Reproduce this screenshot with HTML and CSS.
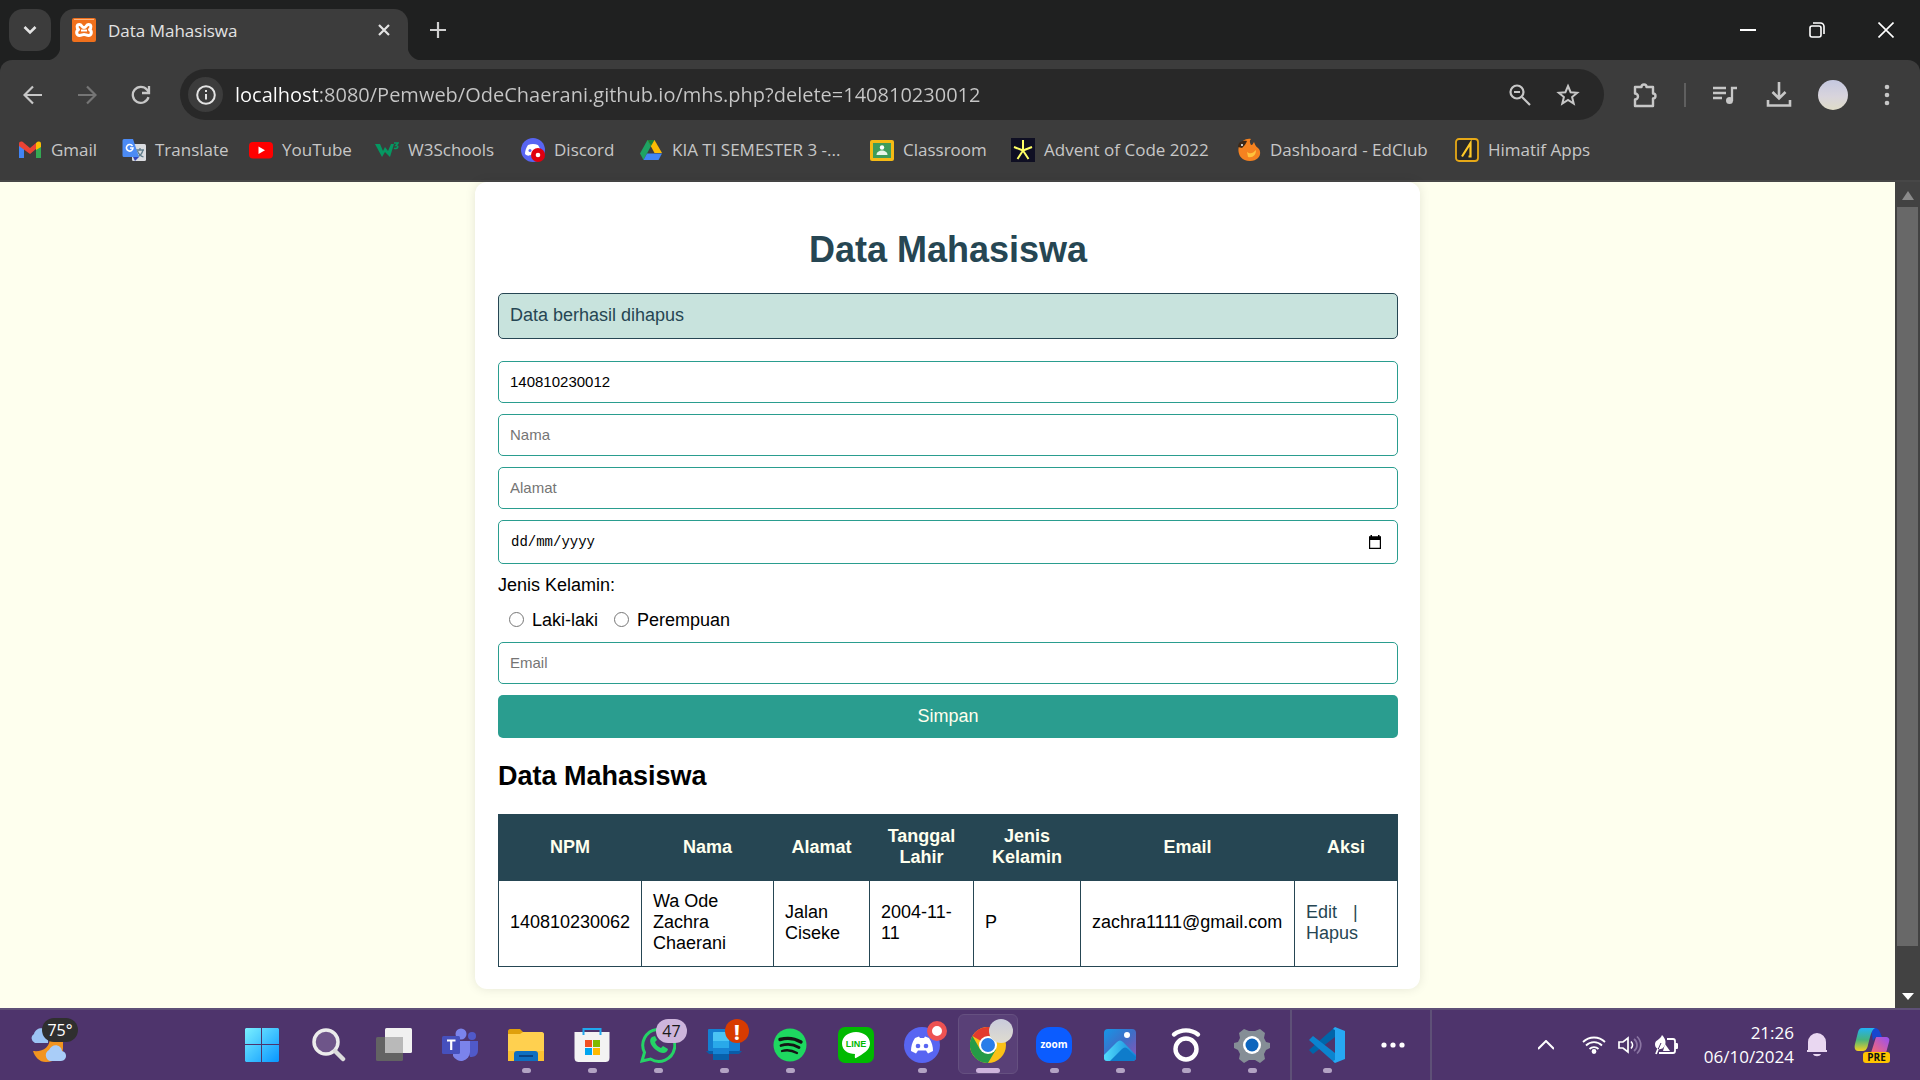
FILE: index.html
```html
<!DOCTYPE html>
<html lang="id">
<head>
<meta charset="utf-8">
<meta name="viewport" content="width=device-width, initial-scale=1">
<title>Data Mahasiswa</title>
<link rel="stylesheet" href="styles.css">
</head>
<body>
<header class="browser">
  <div class="tabstrip">
    <button class="tab-search" type="button" aria-label="Search tabs"><svg width="16" height="16" viewBox="0 0 16 16" fill="none" stroke="#e3e3e3" stroke-width="2.6"><path d="M2.5 5 8 10.500 13.500 5"/></svg></button>
    <div class="tab">
      <svg width="24" height="24" viewBox="0 0 24 24"><rect width="24" height="24" rx="2" fill="#f0701c"/><path d="M2 1.500h20" stroke="#ffb27a" stroke-width="1"/><path d="M7.500 6.500c-3 0-3 3.500-1 5-3 2-2 6 1 6 2 0 3-1 4.500-1s2.500 1 4.500 1c3 0 4-4 1-6 2-1.500 2-5-1-5-2.500 0-2 3-4.500 3s-2-3-4.500-3z" fill="none" stroke="#fff" stroke-width="3" stroke-linejoin="round"/><path d="M9 12.500h6" stroke="#fff" stroke-width="2"/></svg>
      <span class="tab-title">Data Mahasiswa</span>
      <button class="tab-close" type="button" aria-label="Close tab"><svg width="14" height="14" viewBox="0 0 14 14" stroke="#e3e3e3" stroke-width="2.200"><path d="M2 2l10 10M12 2 2 12"/></svg></button>
    </div>
    <button class="new-tab" type="button" aria-label="New tab"><svg width="16" height="16" viewBox="0 0 16 16" stroke="#d0d0d0" stroke-width="2.200"><path d="M8 0v16M0 8h16"/></svg></button>
    <div class="window-controls">
      <button type="button" aria-label="Minimize"><svg width="16" height="16" viewBox="0 0 16 16" stroke="#fff" stroke-width="2"><path d="M0 8h16"/></svg></button>
      <button type="button" aria-label="Restore"><svg width="16" height="16" viewBox="0 0 16 16" fill="none" stroke="#fff" stroke-width="1.600"><rect x="1" y="4" width="11" height="11" rx="2"/><path d="M4 1h7.500a3.500 3.500 0 0 1 3.500 3.500V12"/></svg></button>
      <button type="button" aria-label="Close"><svg width="16" height="16" viewBox="0 0 16 16" stroke="#fff" stroke-width="1.600"><path d="M.5.5l15 15M15.500.5l-15 15"/></svg></button>
    </div>
  </div>
  <div class="toolbar">
    <button class="nav" type="button" aria-label="Back"><svg width="20" height="20" viewBox="0 0 20 20" fill="none" stroke="#c7c7c7" stroke-width="2.200"><path d="M19 10H2M10 1.500 1.500 10 10 18.500"/></svg></button>
    <button class="nav" type="button" aria-label="Forward"><svg width="20" height="20" viewBox="0 0 20 20" fill="none" stroke="#757575" stroke-width="2.200"><path d="M1 10h17M10 1.500 18.500 10 10 18.500"/></svg></button>
    <button class="nav" type="button" aria-label="Reload"><svg width="20" height="20" viewBox="0 0 20 20" fill="none" stroke="#c7c7c7" stroke-width="2.300"><path d="M17.500 12.200A8 8 0 1 1 16 4.800l1.800 2M18 1v7h-7"/></svg></button>
    <div class="omnibox">
      <button class="site-info" type="button" aria-label="Site information"><svg width="20" height="20" viewBox="0 0 20 20" fill="none" stroke="#e3e3e3" stroke-width="2"><circle cx="10" cy="10" r="8.800"/><path d="M10 9v5.500M10 5v2"/></svg></button>
      <input class="url" type="text" aria-label="Address" value="localhost:8080/Pemweb/OdeChaerani.github.io/mhs.php?delete=140810230012">
      <button class="in-omni" type="button" aria-label="Zoom"><svg width="22" height="22" viewBox="0 0 22 22" fill="none" stroke="#c7c7c7" stroke-width="2.200"><circle cx="8" cy="8" r="6.500"/><path d="M13 13l8 8M5 8h6"/></svg></button>
      <button class="in-omni" type="button" aria-label="Bookmark"><svg width="24" height="24" viewBox="0 0 24 24" fill="none" stroke="#c7c7c7" stroke-width="2"><path d="M12 3l2.600 6.200 6.600.5-5.100 4.300 1.600 6.500L12 17l-5.700 3.500 1.600-6.500-5.100-4.300 6.600-.5z"/></svg></button>
    </div>
    <div class="tools">
      <button type="button" aria-label="Extensions"><svg width="26" height="26" viewBox="0 0 26 26" fill="none" stroke="#c7c7c7" stroke-width="2.400" stroke-linejoin="round"><path d="M3 5h6.500a2 2 0 0 1 5 0H21v6.500a2 2 0 0 1 0 5V24H3v-6.500a3 3 0 0 0 0-6z"/></svg></button>
      <span class="divider"></span>
      <button type="button" aria-label="Media"><svg width="24" height="20" viewBox="0 0 24 20" fill="none" stroke="#c7c7c7" stroke-width="2.300"><path d="M0 3h13M0 8h13M0 13h9M19 16V3h5"/><circle cx="16.500" cy="15.500" r="3.500" fill="#c7c7c7" stroke="none"/></svg></button>
      <button type="button" aria-label="Downloads"><svg width="26" height="26" viewBox="0 0 26 26" fill="none" stroke="#c7c7c7" stroke-width="2.600"><path d="M13 0v16M6.500 10l6.500 6.500 6.500-6.500M2 18v5.500h22V18"/></svg></button>
      <button type="button" aria-label="Profile"><span class="avatar"></span></button>
      <button type="button" aria-label="Menu"><svg width="6" height="22" viewBox="0 0 6 22" fill="#c7c7c7"><circle cx="3" cy="3" r="2.300"/><circle cx="3" cy="11" r="2.300"/><circle cx="3" cy="19" r="2.300"/></svg></button>
    </div>
  </div>
  <nav class="bookmarks">
    <a href="#"><svg width="24" height="24" viewBox="0 0 24 24"><path d="M1 6v14h5V10z" fill="#4285f4"/><path d="M18 10v10h5V6z" fill="#34a853"/><path d="M1 6c0-3 3-3 5-1l6 5 6-5v6l-6 5-11-8z" fill="#ea4335"/><path d="M18 5c2-2 5-2 5 1v3l-5 3z" fill="#fbbc04"/></svg>Gmail</a>
    <a href="#"><svg width="24" height="24" viewBox="0 0 24 24"><rect x="10" y="6" width="14" height="17" rx="1.500" fill="#dadce0"/><path d="M14 12h8M18 10v2M21 12c-1 4-3 6-6 7M15.500 13c1 3 3 5 6 6" stroke="#607d8b" stroke-width="1.300" fill="none"/><path d="M2 1h9l6 18H2a1.500 1.500 0 0 1-1.500-1.500v-15A1.500 1.500 0 0 1 2 1z" fill="#4c8bf5"/><path d="M11 19h6l-4 4z" fill="#3344b8"/><path d="M10.500 8A3.300 3.300 0 1 0 11 10H8" fill="none" stroke="#fff" stroke-width="1.600"/></svg>Translate</a>
    <a href="#"><svg width="24" height="24" viewBox="0 0 24 24"><rect y="4" width="24" height="16.500" rx="4" fill="#f00"/><path d="M9.500 8.500v7.500l6.500-3.700z" fill="#fff"/></svg>YouTube</a>
    <a href="#"><svg width="24" height="24" viewBox="0 0 24 24"><path d="M0 6h5l3 7 2-4 3 4 3-7h3l-4 13-5-5-3 5z" fill="#059862"/><path d="M19 5h4l-2 2.500c3 0 2 4-2 2.700" fill="none" stroke="#059862" stroke-width="1.600"/></svg>W3Schools</a>
    <a href="#"><svg width="24" height="24" viewBox="0 0 24 24"><circle cx="12" cy="12" r="12" fill="#5865f2"/><path d="M7 7c3-1.500 7-1.500 10 0 2 3 3 6 3 9-2 2-3 2-4 1-2 .7-5 .7-7 0-1 1-3 1-5-1 0-3 1-6 3-9z" fill="#fff"/><circle cx="9" cy="12.500" r="1.500" fill="#5865f2"/><circle cx="17" cy="17" r="7" fill="#e00010"/><circle cx="17" cy="17" r="2.300" fill="#fff"/></svg>Discord</a>
    <a href="#"><svg width="24" height="24" viewBox="0 0 24 24"><path d="M8.500 2h7l7.500 13h-7.500z" fill="#fbbc04"/><path d="M8.500 2 12 8 4.500 22 1 15.500z" fill="#1ea362"/><path d="M8.500 2h7L12 8z" fill="#188038"/><path d="M8 15.500h15L19.500 22h-15z" fill="#4285f4"/></svg>KIA TI SEMESTER 3 -...</a>
    <a href="#"><svg width="24" height="24" viewBox="0 0 24 24"><rect y="2" width="24" height="21" rx="2" fill="#f5ba15"/><rect x="3" y="5" width="18" height="15" fill="#3f9c5a"/><circle cx="12" cy="9.500" r="2.200" fill="#fff"/><path d="M6.500 17c0-6 11-6 11 0z" fill="#e8f5e9"/></svg>Classroom</a>
    <a href="#"><svg width="24" height="24" viewBox="0 0 24 24"><rect width="24" height="24" fill="#0f0f23"/><path d="M12 2v11M3 9l9 3.500M21 9l-9 3.500M6.500 21 12 12.500l5.500 8.500" stroke="#ffff66" stroke-width="2" fill="none"/></svg>Advent of Code 2022</a>
    <a href="#"><svg width="24" height="24" viewBox="0 0 24 24"><path d="M2 8C4 3 9 0 14 1c-2 2-1 4 0 6 2 0 2-2 3-3 1 2 1 4 4 6 4 3 3 13-8 13C3 23 0 15 2 8z" fill="#f58220"/><path d="M10 14c4 3 7 0 9-2 0 5-3 8-8 7z" fill="#ffc23c"/><path d="M1 9c0-4 3-7 9-6-1 3-3 5-5 7z" fill="#3b2818"/><circle cx="5" cy="7" r="1" fill="#fff"/></svg>Dashboard - EdClub</a>
    <a href="#"><svg width="24" height="24" viewBox="0 0 24 24"><rect x="1" y="1" width="22" height="22" rx="3" fill="#282828" stroke="#e6a817" stroke-width="1.800"/><path d="M7 18.500 15.500 5v13.500h-2" fill="none" stroke="#ffc928" stroke-width="2.200"/></svg>Himatif Apps</a>
  </nav>
</header>

<div class="viewport">
  <main class="page">
    <div class="container">
      <h1>Data Mahasiswa</h1>
      <div class="message" role="status">Data berhasil dihapus</div>
      <form class="form">
        <input class="field" type="text" aria-label="NPM" value="140810230012">
        <input class="field" type="text" aria-label="Nama" placeholder="Nama">
        <input class="field" type="text" aria-label="Alamat" placeholder="Alamat">
        <div class="field date">
          <input type="text" aria-label="Tanggal lahir" placeholder="dd/mm/yyyy">
          <button type="button" aria-label="Pilih tanggal"><svg width="14" height="14" viewBox="0 0 14 14"><path d="M2.500 0h1.500v1.200h6V0h1.500v1.200H13V14H1V1.200h1.500zM2.200 5v7.800h9.600V5z" fill="#000" fill-rule="evenodd"/></svg></button>
        </div>
        <fieldset class="gender">
          <legend>Jenis Kelamin:</legend>
          <div class="options">
            <input type="radio" id="laki" name="jenis_kelamin"><label for="laki">Laki-laki</label>
            <input type="radio" id="perempuan" name="jenis_kelamin"><label for="perempuan">Perempuan</label>
          </div>
        </fieldset>
        <input class="field" type="email" aria-label="Email" placeholder="Email">
        <button class="save" type="button">Simpan</button>
      </form>
      <h2>Data Mahasiswa</h2>
      <table>
        <colgroup><col class="npm"><col class="nama"><col class="alamat"><col class="lahir"><col class="kelamin"><col class="email"><col class="aksi"></colgroup>
        <thead>
          <tr><th>NPM</th><th>Nama</th><th>Alamat</th><th>Tanggal Lahir</th><th>Jenis Kelamin</th><th>Email</th><th>Aksi</th></tr>
        </thead>
        <tbody>
          <tr><td>140810230062</td><td>Wa Ode Zachra Chaerani</td><td>Jalan Ciseke</td><td>2004-11-11</td><td>P</td><td>zachra1111@gmail.com</td><td><a class="edit" href="#">Edit</a> <span class="bar">|</span> <a href="#">Hapus</a></td></tr>
        </tbody>
      </table>
    </div>
  </main>
  <div class="scrollbar">
    <svg width="12" height="9" viewBox="0 0 12 9"><path d="M0 9 6 0l6 9z" fill="#8a8a8a"/></svg>
    <span class="thumb"></span>
    <svg width="12" height="7" viewBox="0 0 12 7"><path d="M0 0h12L6 7z" fill="#fff"/></svg>
  </div>
</div>

<footer class="taskbar">
  <button class="weather" type="button" aria-label="Weather">
    <svg width="37" height="38" viewBox="0 0 37 38"><path d="M3 25c10 1 17-3 17-14l13-2v13c0 9-8 14-17 14C9 36 5 31 3 25z" fill="#f2941f"/><path d="M5 17a5 5 0 0 1-1-9c2-7 12-8 14 0v9z" fill="#9cc4f5"/><path d="M20 35a6 6 0 0 1-1-11c3-7 12-6 13 1 6 1 5 10-1 10z" fill="#a9cdf8"/></svg>
    <span class="temp">75°</span>
  </button>
  <div class="apps">
    <button type="button" aria-label="Start"><svg width="36" height="36" viewBox="0 0 36 36"><defs><linearGradient id="win" x1="0" y1="0" x2="1" y2="1"><stop stop-color="#7af0ff"/><stop offset="1" stop-color="#0896ff"/></linearGradient></defs><path d="M2 1h15v16H1V2zM18 1h16l1 1v15H18zM1 18h16v17H2l-1-1zM18 18h17v16l-1 1H18z" fill="url(#win)"/></svg></button>
    <button type="button" aria-label="Search"><svg width="36" height="36" viewBox="0 0 36 36"><circle cx="16" cy="15" r="12" fill="#6e5589" stroke="#ececec" stroke-width="3.500"/><path d="M25 24l8 8" stroke="#dcdcdc" stroke-width="4.500" stroke-linecap="round"/></svg></button>
    <button type="button" aria-label="Task view"><svg width="36" height="36" viewBox="0 0 36 36"><rect x="0" y="10" width="27" height="24" rx="1.500" fill="#636363"/><rect x="9" y="1" width="27" height="25" rx="1.500" fill="#f1f1f1"/><path d="M9 10h18v16H10l-1-1z" fill="#b9b9b9"/></svg></button>
    <button type="button" aria-label="Teams"><svg width="36" height="36" viewBox="0 0 36 36"><circle cx="30" cy="9" r="4" fill="#5059c9"/><path d="M25 14h11v9c0 8-8 7-8 7z" fill="#5059c9"/><circle cx="19" cy="7" r="5.500" fill="#7b83eb"/><path d="M11 14h17v11a9 9 0 0 1-17 4z" fill="#7b83eb"/><rect x="0" y="9" width="18" height="18" rx="1.500" fill="#4650bd"/><path d="M5 13.500h8.500M9.200 13.500V23" stroke="#fff" stroke-width="2.200"/></svg></button>
    <button class="running" type="button" aria-label="File Explorer"><svg width="36" height="36" viewBox="0 0 36 36"><path d="M0 4c0-1 1-2 2-2h10l4 4v8H0z" fill="#dfa00c"/><path d="M0 7h12l3-2h19c1 0 2 1 2 2v27H0z" fill="#ffd04f"/><path d="M0 24h36v10H0z" fill="#fbc132"/><path d="M6 34V27c0-2 1-3 3-3h18c2 0 3 1 3 3v7z" fill="#0f6fc0"/><path d="M11 29h14" stroke="#0a4382" stroke-width="2"/></svg></button>
    <button class="running" type="button" aria-label="Store"><svg width="36" height="36" viewBox="0 0 36 36"><path d="M.5 5h35v26c0 3-2 4-4 4h-27c-2 0-4-1-4-4z" fill="#f3f3f3"/><path d="M9.500 8V2h17v6" fill="none" stroke="#20a8ee" stroke-width="2"/><path d="M11 13h7v7h-7z" fill="#f25022"/><path d="M19 13h7v7h-7z" fill="#7fba00"/><path d="M11 21h7v7h-7z" fill="#00a4ef"/><path d="M19 21h7v7h-7z" fill="#ffb900"/></svg></button>
    <button class="running" type="button" aria-label="WhatsApp"><svg width="36" height="36" viewBox="0 0 36 36"><path d="M2 34l2.500-8.500A16 16 0 1 1 10.500 32z" fill="none" stroke="#25d366" stroke-width="3"/><path d="M12 10c-4 3-1 9 4 13s11 4 12-1l-5-3-2 2c-3-1-5-3-6-6l2-2-2-4z" fill="#25d366"/></svg><span class="badge count">47</span></button>
    <button class="running" type="button" aria-label="Phone Link"><svg width="36" height="36" viewBox="0 0 36 36"><rect x="2" y="2" width="32" height="22" rx="1" fill="#147fd1"/><path d="M0 24h36l-3 3H3z" fill="#0a5ca8"/><rect x="7" y="5" width="16" height="28" rx="1" fill="#4bc5f5"/><path d="M7 14h16v7H7z" fill="#29a9ea"/><path d="M7 21h16v6H7z" fill="#1683d4"/><path d="M7 27h16v6H7z" fill="#0861ab"/></svg><span class="badge alert">!</span></button>
    <button class="running" type="button" aria-label="Spotify"><svg width="36" height="36" viewBox="0 0 36 36" fill="none" stroke="#141414" stroke-linecap="round"><circle cx="18" cy="18" r="16.500" fill="#1ed760" stroke="none"/><path d="M8 12.500c7-2 15-1 21 2.500" stroke-width="3.400"/><path d="M9 18.500c6-2 13-1 18 2" stroke-width="2.800"/><path d="M10 24c5-1.500 10-.8 15 2" stroke-width="2.300"/></svg></button>
    <button type="button" aria-label="LINE"><svg width="36" height="36" viewBox="0 0 36 36"><rect width="36" height="36" rx="7" fill="#00b900"/><path d="M18 5c8 0 14 5 14 11.500C32 23 25 27 18 31c-1 .5-1.500 0-1-4-7 0-13-4-13-10.500S10 5 18 5z" fill="#fff"/><text class="line-word" x="18" y="20" text-anchor="middle">LINE</text></svg></button>
    <button class="running" type="button" aria-label="Discord"><svg width="36" height="36" viewBox="0 0 36 36"><circle cx="18" cy="18" r="18" fill="#5865f2"/><path d="M11 11l4-1.500 1 1.500h4l1-1.500 4 1.500c3 4 4 9 4 13l-5 2.500-2-3h-8l-2 3L7 24c0-4 1-9 4-13z" fill="#fff"/><circle cx="14" cy="19" r="2.300" fill="#5865f2"/><circle cx="22" cy="19" r="2.300" fill="#5865f2"/></svg><span class="badge rec"></span></button>
    <button class="running active" type="button" aria-label="Chrome"><svg width="36" height="36" viewBox="0 0 36 36"><circle cx="18" cy="18" r="18" fill="#fbc116"/><path d="M18 18 2.400 9A18 18 0 0 1 33.600 9H18z" fill="#e33b2e"/><path d="M2.400 9A18 18 0 0 0 18 36l8-13.500L10.200 22.500z" fill="#259b47"/><circle cx="18" cy="18" r="9" fill="#fff"/><circle cx="18" cy="18" r="7" fill="#2a7de9"/></svg><span class="badge face"></span></button>
    <button class="running" type="button" aria-label="Zoom"><svg width="36" height="36" viewBox="0 0 36 36"><rect width="36" height="36" rx="14" fill="#0b5cff"/><text class="zoom-word" x="18" y="21" text-anchor="middle">zoom</text></svg></button>
    <button class="running" type="button" aria-label="Photos"><svg width="36" height="36" viewBox="0 0 36 36"><defs><linearGradient id="ph" x1="0" y1="0" x2="1" y2="1"><stop stop-color="#1696e8"/><stop offset=".5" stop-color="#3f6dc6"/><stop offset="1" stop-color="#9253b4"/></linearGradient><linearGradient id="pm" x1="0" y1="0" x2="1" y2="0"><stop stop-color="#52dcfc"/><stop offset="1" stop-color="#1286da"/></linearGradient></defs><rect x="2" y="2" width="32" height="32" rx="4" fill="url(#ph)"/><path d="M2 28 15 15c2-2 4-2 6 0l13 13v3c0 2-2 3-4 3H5c-2 0-3-1-3-3z" fill="url(#pm)"/><path d="M8 34l12-12c2-2 4-2 6 0l8 8c0 3-2 4-4 4z" fill="#0f7ccb"/><circle cx="25" cy="8" r="3" fill="#fff"/></svg></button>
    <button class="running" type="button" aria-label="Podcasts"><svg width="36" height="36" viewBox="0 0 36 36" fill="none" stroke="#fff"><circle cx="18" cy="22" r="10.500" stroke-width="4.400"/><path d="M6 7.500C13 2 23 2 30 7.500" stroke-width="4.400" stroke-linecap="round"/></svg></button>
    <button class="running" type="button" aria-label="Settings"><svg width="36" height="36" viewBox="0 0 36 36"><path d="M10 2l5 2h6l5-2 5 4-1 5 2 4 4 1v5l-4 2-2 4 1 5-5 4-5-3h-6l-5 3-5-4 1-5-2-4-4-2v-5l4-1 2-4-1-5z" fill="#858e96"/><circle cx="18" cy="18" r="9" fill="#fff"/><circle cx="18" cy="18" r="6.500" fill="#0d65bd"/></svg></button>
  </div>
  <div class="apps pinned">
    <button class="running" type="button" aria-label="Visual Studio Code"><svg width="36" height="36" viewBox="0 0 36 36"><path d="M26 0v10L4 27l-4-4z" fill="#0065a9"/><path d="M0 13l4-4 22 17v10z" fill="#0b84cf"/><path d="M26 0l10 4v28l-10 4-2-2 2-1V3l-2-1z" fill="#27a8f2"/></svg></button>
    <button type="button" aria-label="More apps"><svg width="24" height="6" viewBox="0 0 24 6" fill="#fff"><circle cx="3" cy="3" r="2.600"/><circle cx="12" cy="3" r="2.600"/><circle cx="21" cy="3" r="2.600"/></svg></button>
  </div>
  <div class="tray">
    <button type="button" aria-label="Hidden icons"><svg width="16" height="10" viewBox="0 0 16 10" fill="none" stroke="#fff" stroke-width="2"><path d="M0 9l8-8 8 8"/></svg></button>
    <button class="status" type="button" aria-label="Network, sound and battery">
      <svg width="24" height="20" viewBox="0 0 24 20" fill="none" stroke="#fff" stroke-width="1.800"><path d="M1 7C7 1 17 1 23 7M4 10.500c4.500-4.500 11.500-4.500 16 0M7.500 14c2.500-2.500 6.500-2.500 9 0"/><circle cx="12" cy="16.500" r="1.500" fill="#fff"/></svg>
      <svg width="24" height="20" viewBox="0 0 24 20" fill="none" stroke="#fff" stroke-width="1.700"><path d="M1 7v6h4l5 4V3L5 7z"/><path d="M13 6.500c2 2 2 5 0 7"/><path d="M16 4c4 3 4 9 0 12M19 1.500c5 5 5 12 0 17" stroke="#8b76a3"/></svg>
      <svg width="24" height="20" viewBox="0 0 24 20" fill="none" stroke="#fff" stroke-width="1.800"><path d="M13 4h6c2 0 2 1 2 2v10c0 1 0 2-2 2H5"/><path d="M21 8h2c1 0 1 1 1 2v2c0 1 0 2-1 2h-2z" fill="#fff" stroke="none"/><path d="M9 16h7L11 9z" fill="#fff" stroke="none"/><path d="M8 0c4 4 5 9 1 13-2 2-8 2-8-4 0-4 5-4 7-9z" fill="#fff" stroke="none"/><path d="M7 8 2 19" stroke="#4e346c" stroke-width="1"/><path d="M4 14l-2 5"/></svg>
    </button>
    <button class="clock" type="button"><span>21:26</span><span>06/10/2024</span></button>
    <button class="bell" type="button" aria-label="Notifications"><svg width="22" height="24" viewBox="0 0 22 24" fill="#e9d7f1"><path d="M2 19V9a9 9 0 0 1 18 0v10zM1 17h20v2H1zM7 21h8c-1 3-7 3-8 0z"/></svg></button>
    <button class="copilot" type="button" aria-label="Copilot"><svg width="36" height="36" viewBox="0 0 36 36"><defs><linearGradient id="ca" x1="0" y1="0" x2="0" y2="1"><stop stop-color="#22b2f5"/><stop offset=".5" stop-color="#45b37f"/><stop offset="1" stop-color="#f5d022"/></linearGradient><linearGradient id="cb" x1="0" y1="1" x2="1" y2="0"><stop stop-color="#ff6a6a"/><stop offset="1" stop-color="#9550f5"/></linearGradient></defs><path d="M17 26l5-16h9c4 0 5 2 4 5l-3 11z" fill="url(#cb)"/><path d="M17 1h4c4 0 5 4 7 9h-5c-2 0-3 2-4 4z" fill="#1746cf"/><path d="M8 1h13c-4 2-5 10-7 17-1 5-3 6-6 6H4c-3 0-4-3-3-7L4 5c1-3 2-4 4-4z" fill="url(#ca)"/></svg><span class="pre">PRE</span></button>
  </div>
</footer>
</body>
</html>
```
FILE: styles.css
```css
* { box-sizing: border-box; }

body {
  margin: 0;
  min-height: 100vh;
  display: flex;
  flex-direction: column;
  font-family: "Liberation Sans", Arial, sans-serif;
  font-size: 18px;
  line-height: 21px;
}

button {
  font: inherit;
  border: 0;
  padding: 0;
  background: none;
  display: flex;
  align-items: center;
  justify-content: center;
}

svg { flex: none; display: block; }

/* Browser window */
.browser {
  background: #1f2020;
  color: #c7c7c7;
  font-family: "Open Sans", "Noto Sans", sans-serif;
  font-size: 17px;
}

.tabstrip {
  height: 60px;
  padding: 9px 0 0 9px;
  display: flex;
}

.tab-search {
  width: 42px;
  height: 42px;
  border-radius: 14px;
  background: #3c3c3c;
  margin-right: 9px;
}

.tab {
  position: relative;
  width: 348px;
  padding: 0 17px 9px 12px;
  display: flex;
  align-items: center;
  gap: 12px;
  border-radius: 14px 14px 0 0;
  background: #3c3c3c;
  color: #e3e3e3;
}

.tab::before,
.tab::after {
  content: "";
  position: absolute;
  bottom: 0;
  width: 14px;
  height: 14px;
}

.tab::before {
  left: -14px;
  background: radial-gradient(circle at 0 0, transparent 14px, #3c3c3c 15px);
}

.tab::after {
  right: -14px;
  background: radial-gradient(circle at 100% 0, transparent 14px, #3c3c3c 15px);
}

.tab-title { flex: 1; }
.new-tab { width: 60px; height: 42px; }

.window-controls {
  margin-left: auto;
  height: 42px;
  display: flex;
}

.window-controls button { width: 69px; }

.toolbar {
  height: 69px;
  padding: 0 6px;
  display: flex;
  align-items: center;
  background: #3c3c3c;
  border-radius: 12px 12px 0 0;
}

.nav { width: 54px; height: 52px; }

.omnibox {
  flex: 1;
  height: 51px;
  margin-left: 12px;
  padding: 0 18px 0 8px;
  display: flex;
  align-items: center;
  border-radius: 26px;
  background: #282828;
}

.site-info {
  width: 35px;
  height: 35px;
  border-radius: 50%;
  background: #3c3c3c;
}

.url {
  flex: 1;
  min-width: 0;
  height: 40px;
  margin-left: 12px;
  padding: 0;
  border: 0;
  font-family: "Open Sans", "Noto Sans", sans-serif;
  font-size: 20px;
  color: transparent;
  background: linear-gradient(to right, #fff 84px, #c7c7c7 84px);
  -webkit-background-clip: text;
  background-clip: text;
}

.in-omni { width: 36px; height: 36px; }
.in-omni + .in-omni { margin-left: 12px; }

.tools {
  display: flex;
  align-items: center;
}

.tools button { width: 54px; height: 48px; }
.tools button:first-child { margin-left: 14px; }

.divider {
  width: 2px;
  height: 24px;
  margin: 0 12px;
  background: #5f5f5f;
}

.avatar {
  width: 30px;
  height: 30px;
  border-radius: 50%;
  background: linear-gradient(#c5c8e0, #d8d4dc 55%, #dfdcc8);
}

.bookmarks {
  height: 53px;
  padding: 0 18px 10px;
  display: grid;
  grid-template-columns: 104px 127px 126px 146px 118px 231px 141px 226px 218px auto;
  align-items: center;
  background: #3c3c3c;
  border-bottom: 2px solid #474747;
}

.bookmarks a {
  display: flex;
  align-items: center;
  gap: 9px;
  color: inherit;
  text-decoration: none;
  white-space: nowrap;
}

/* Page */
.viewport {
  flex: 1;
  display: flex;
  background: #feffee;
}

.page {
  flex: 1;
  padding-bottom: 18px;
}

.container {
  max-width: 945px;
  margin: 0 auto;
  padding: 22px 22px 22px 23px;
  border-radius: 12px;
  background: #fff;
  box-shadow: 0 0 11px rgba(0, 0, 0, .1);
}

h1 {
  margin: 25px 0 23px;
  font-size: 36px;
  line-height: 41px;
  text-align: center;
  color: #264653;
}

.message {
  margin-bottom: 22px;
  padding: 11px 11px 13px;
  line-height: 20px;
  border: 1px solid #264653;
  border-radius: 5px;
  background: #c8e3dd;
  color: #264653;
}

.form {
  display: flex;
  flex-direction: column;
  gap: 11px;
}

.field {
  width: 100%;
  height: 42px;
  padding: 0 11px 2px;
  border: 1px solid #2a9d8f;
  border-radius: 5px;
  background: #fff;
  font: 15px "Liberation Sans", Arial, sans-serif;
}

.field::placeholder { color: #757575; }

.date {
  height: 44px;
  padding: 0 15px 0 12px;
  display: flex;
  align-items: center;
}

.date input {
  flex: 1;
  padding: 0;
  border: 0;
  font: 14px "Liberation Mono", "Courier New", monospace;
}

.date input::placeholder { color: #000; }

.gender {
  margin: 0;
  padding: 0;
  border: 0;
}

.gender legend { padding: 0; }

.options {
  margin-top: 14px;
  display: flex;
  align-items: center;
}

.options input {
  width: 15px;
  height: 15px;
  margin: 0 8px 2px 11px;
}

.options label { margin-right: 5px; }

.save {
  height: 43px;
  border-radius: 5px;
  background: #2a9d8f;
  color: #feffee;
}

h2 {
  margin: 23px 0 22px;
  font-size: 27px;
  line-height: 31px;
  color: #000;
}

table {
  width: 100%;
  border-collapse: collapse;
  table-layout: fixed;
}

.npm { width: 143px; }
.nama { width: 132px; }
.alamat { width: 96px; }
.lahir { width: 104px; }
.kelamin { width: 107px; }
.email { width: 214px; }

th,
td {
  padding: 11px;
  border: 1px solid #264653;
}

th {
  padding-bottom: 12px;
  background: #264653;
  color: #feffee;
}

td {
  padding: 10px 11px 12px;
  text-align: left;
}

td a,
.bar {
  color: #264653;
  text-decoration: none;
}

.edit { margin-right: 11px; }

.scrollbar {
  width: 25px;
  padding: 9px 2px 8px;
  display: flex;
  flex-direction: column;
  align-items: center;
  background: #424242;
}

.thumb {
  width: 21px;
  flex: 1;
  margin: 7px 0 47px;
  background: #686868;
}

/* Taskbar */
.taskbar {
  height: 72px;
  display: flex;
  border-top: 2px solid #5e5077;
  background: #4e346c;
  color: #fff;
  font-family: "Open Sans", "Noto Sans", sans-serif;
}

.weather {
  position: relative;
  width: 229px;
  padding-left: 30px;
  justify-content: flex-start;
}

.temp {
  position: absolute;
  left: 42px;
  top: 8px;
  width: 36px;
  height: 24px;
  border-radius: 12px;
  background: #2f2f2f;
  color: #fff;
  font-size: 16px;
  line-height: 24px;
}

.apps { display: flex; }

.apps button {
  position: relative;
  width: 66px;
}

.running::after {
  content: "";
  position: absolute;
  bottom: 7px;
  left: 29px;
  width: 9px;
  height: 5px;
  border-radius: 3px;
  background: #b3a3c4;
}

.active::before {
  content: "";
  position: absolute;
  inset: 4px 3px 6px;
  border: 1px solid #655080;
  border-radius: 6px;
  background: #594077;
}

.active svg { position: relative; }

.active::after {
  left: 21px;
  width: 24px;
  background: #ceb4dd;
}

.badge {
  position: absolute;
  top: 9px;
  right: 8px;
  width: 24px;
  height: 24px;
  border-radius: 12px;
  line-height: 24px;
}

.count {
  right: 4px;
  width: 31px;
  background: #cdb5dc;
  color: #1a1a1a;
  font-size: 16px;
}

.alert {
  background: #d83b01;
  color: #fff;
  font-size: 22px;
  font-weight: 700;
}

.rec {
  width: 20px;
  height: 20px;
  top: 11px;
  border: 5px solid #ed5252;
  background: #fff;
}

.face { background: linear-gradient(#c9cbdc, #dfdccf); }

.line-word {
  font: 700 9px "Liberation Sans", sans-serif;
  fill: #00b900;
}

.zoom-word {
  font: 700 10px "Open Sans", sans-serif;
  fill: #fff;
}

.pinned {
  margin-left: 5px;
  padding: 0 4px 0 2px;
  border: solid #5e5077;
  border-width: 0 2px;
}

.tray {
  margin-left: auto;
  padding-right: 30px;
  display: flex;
  align-items: center;
}

.tray button { color: #fff; }

.status {
  gap: 12px;
  margin: 0 26px 0 28px;
}

.clock {
  flex-direction: column;
  align-items: flex-end;
  line-height: 24px;
  font-size: 17px;
}

.bell { margin: 0 26px 0 12px; }
.copilot { position: relative; }

.pre {
  position: absolute;
  left: 9px;
  bottom: 0;
  width: 27px;
  border-radius: 3px;
  background: #ffc400;
  color: #111;
  font-size: 10px;
  font-weight: 700;
  line-height: 11px;
}
```
